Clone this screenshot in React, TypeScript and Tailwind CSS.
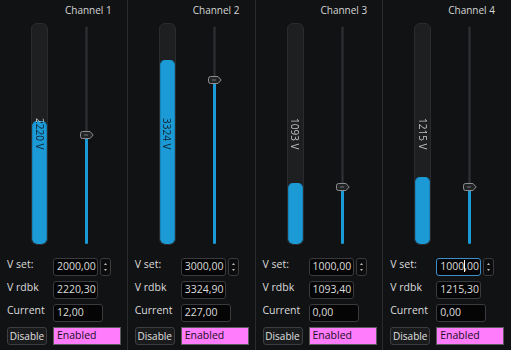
import React from "react";

type Ch = {
  name: string;
  vset: string;
  rdbk: string;
  current: string;
  bar: number;
  barLabel: string;
  slider: number;
  focused?: boolean;
};

const channels: Ch[] = [
  { name: "Channel 1", vset: "2000,00", rdbk: "2220,30", current: "12,00", bar: 2220 / 4000, barLabel: "2220 V", slider: 0.5 },
  { name: "Channel 2", vset: "3000,00", rdbk: "3324,90", current: "227,00", bar: 3324 / 4000, barLabel: "3324 V", slider: 0.75 },
  { name: "Channel 3", vset: "1000,00", rdbk: "1093,40", current: "0,00", bar: 1093 / 4000, barLabel: "1093 V", slider: 0.26 },
  { name: "Channel 4", vset: "1000,00", rdbk: "1215,30", current: "0,00", bar: 1215 / 4000, barLabel: "1215 V", slider: 0.26, focused: true },
];

const BAR_H = 222;
const TRACK_H = 218;

function Bar({ frac, label }: { frac: number; label: string }) {
  const h = Math.round(BAR_H * frac);
  return (
    <div className="relative w-[17px] h-[222px] rounded-[6px] bg-[#1e1f21] border border-[#2a2b2e] overflow-hidden">
      <div
        className="absolute left-0 right-0 bottom-0 rounded-[5px] bg-[#1b9ad6] border-x border-[#1585bb]"
        style={{ height: h }}
      />
      <div
        className="absolute inset-0 flex items-center justify-center [writing-mode:vertical-rl] whitespace-nowrap text-[10px] leading-none text-transparent bg-clip-text"
        style={{
          backgroundImage: `linear-gradient(to top, #102230 ${h - 1}px, #c9c9c9 ${h - 1}px)`,
        }}
      >
        {label}
      </div>
    </div>
  );
}

function Slider({ frac }: { frac: number }) {
  const pos = Math.round(TRACK_H * frac);
  return (
    <div className="relative w-[14px] h-[222px]">
      <div className="absolute left-[5px] top-[3px] w-[3px] h-[218px] rounded-full bg-[#2f3033] border border-[#222326]" />
      <div className="absolute left-[5px] w-[3px] rounded-full bg-[#1b9ad6]" style={{ height: pos, bottom: 1 }} />
      <svg
        className="absolute left-0"
        style={{ bottom: 1 + pos - 4 }}
        width="14"
        height="8"
        viewBox="0 0 14 8"
      >
        <path d="M2.5 0.5 H10 L13.2 4 L10 7.5 H2.5 Q0.5 7.5 0.5 5.5 V2.5 Q0.5 0.5 2.5 0.5 Z" fill="#232426" stroke="#8d8e90" strokeWidth="1" />
        <rect x="4" y="3" width="4" height="2" fill="#4a4b4d" />
      </svg>
    </div>
  );
}

function Field({ w, children, focused }: { w: string; children: React.ReactNode; focused?: boolean }) {
  return (
    <div
      className={`${w} h-[18px] rounded-[3px] bg-[#050505] flex items-center pl-[3px] text-[10.5px] text-[#dcdcdc] ${
        focused ? "border border-[#3d8fcc]" : "border border-[#3a3b3e]"
      }`}
    >
      {children}
    </div>
  );
}

function Spin() {
  return (
    <div className="ml-[2px] w-[11px] h-[18px] rounded-[3px] border border-[#3a3b3e] bg-[#0c0c0d] flex flex-col items-center justify-between py-[4px]">
      <svg width="3" height="2" viewBox="0 0 3 2">
        <path d="M0 2 L1.5 0 L3 2 Z" fill="#bdbdbd" />
      </svg>
      <svg width="3" height="2" viewBox="0 0 3 2">
        <path d="M0 0 L1.5 2 L3 0 Z" fill="#bdbdbd" />
      </svg>
    </div>
  );
}

function Panel({ ch, last }: { ch: Ch; last?: boolean }) {
  return (
    <div className={`w-[128px] h-[350px] flex flex-col bg-[#111214] ${last ? "" : "border-r border-[#2a2b2d]"}`}>
      <div className="h-[23px] pl-[65px] pt-[3px] text-[10px] leading-[14px] text-[#d6d6d6]">{ch.name}</div>
      <div className="flex pl-[31px]">
        <Bar frac={ch.bar} label={ch.barLabel} />
        <div className="ml-[32px]">
          <Slider frac={ch.slider} />
        </div>
      </div>
      <div className="mt-[13px] pl-[7px] flex flex-col gap-[5px] text-[10.5px] text-[#dcdcdc]">
        <div className="flex items-center h-[18px]">
          <div className="w-[46px] -mt-[4px]">V set:</div>
          <Field w="w-[45px]" focused={ch.focused}>
            {ch.focused ? (
              <span className="relative">
                1000<span className="relative">,<span className="absolute left-[0px] top-[1px] w-px h-[12px] bg-white" /></span>00
              </span>
            ) : (
              ch.vset
            )}
          </Field>
          <Spin />
        </div>
        <div className="flex items-center h-[18px]">
          <div className="w-[46px] -mt-[4px]">V rdbk</div>
          <Field w="w-[45px]">{ch.rdbk}</Field>
        </div>
        <div className="flex items-center h-[18px]">
          <div className="w-[46px] -mt-[4px]">Current</div>
          <Field w="w-[50px]">{ch.current}</Field>
        </div>
        <div className="flex items-center h-[18px]">
          <div className="w-[40px] h-[18px] rounded-[3px] border border-[#3c3d40] bg-[#1a1b1d] flex items-center justify-center text-[10px] text-[#e0e0e0]">
            Disable
          </div>
          <div className="ml-[6px] w-[68px] h-[18px] border border-[#5a5a5a] bg-[#ff7cfd] flex items-center pl-[3px] text-[#1a0d1a]">
            Enabled
          </div>
        </div>
      </div>
    </div>
  );
}

export default function App() {
  return (
    <div
      className="w-[511px] h-[350px] flex overflow-hidden bg-[#111214]"
      style={{ fontFamily: '"Open Sans", "Noto Sans", sans-serif' }}
    >
      {channels.map((ch, i) => (
        <Panel key={ch.name} ch={ch} last={i === channels.length - 1} />
      ))}
    </div>
  );
}
